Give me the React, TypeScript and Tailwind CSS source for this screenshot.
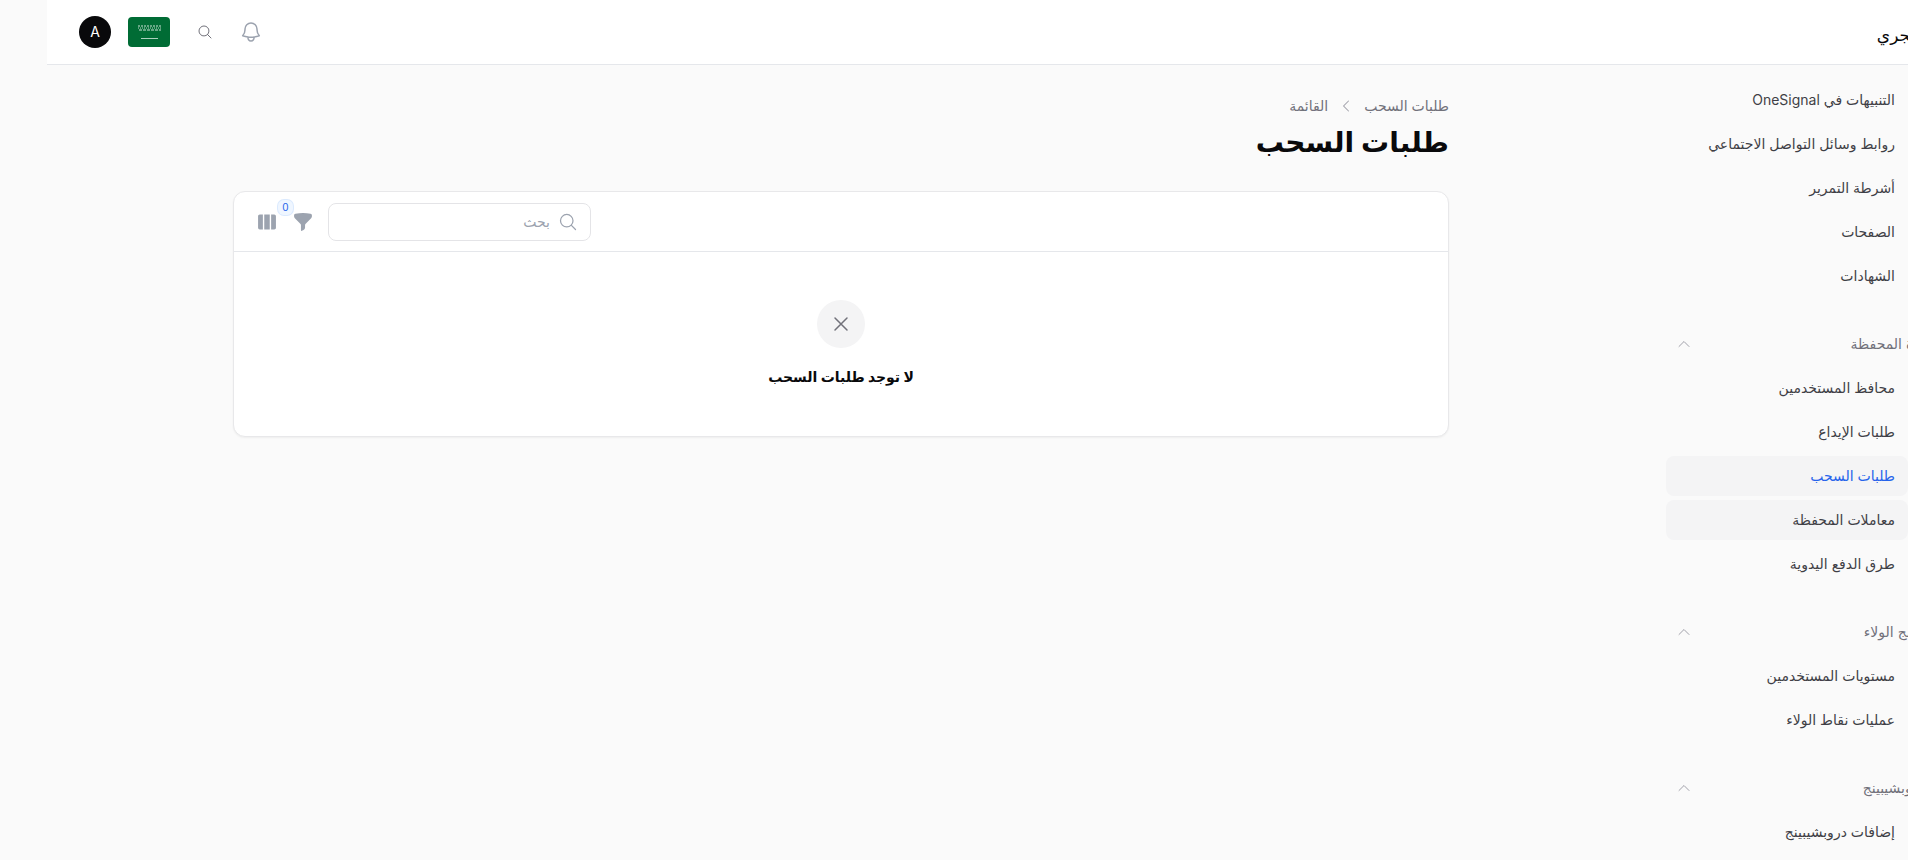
import {
  HiChevronLeft,
  HiFunnel,
  HiOutlineBell,
  HiOutlineChevronUp,
  HiOutlineMagnifyingGlass,
  HiOutlineXMark,
  HiViewColumns,
} from "react-icons/hi2";

const sections = [
  {
    label: "",
    items: [
      "الإشعارات البريدية",
      "التنبيهات في OneSignal",
      "روابط وسائل التواصل الاجتماعي",
      "أشرطة التمرير",
      "الصفحات",
      "الشهادات",
    ],
  },
  {
    label: "إدارة المحفظة",
    items: [
      "محافظ المستخدمين",
      "طلبات الإيداع",
      "طلبات السحب",
      "معاملات المحفظة",
      "طرق الدفع اليدوية",
    ],
  },
  {
    label: "برنامج الولاء",
    items: ["مستويات المستخدمين", "عمليات نقاط الولاء"],
  },
  {
    label: "الدروبشيبينج",
    items: ["إضافات دروبشيبينج"],
  },
];

function SaudiFlag() {
  return (
    <svg viewBox="0 0 42 30" className="h-[30px] w-[42px]">
      <rect width="42" height="30" rx="4" fill="#006c35" />
      <g stroke="#ffffff" fill="none">
        <path d="M10 9h23" strokeWidth="1.2" strokeDasharray="2 1" opacity="0.8" />
        <path d="M10 11h23" strokeWidth="1" strokeDasharray="1 1" opacity="0.7" />
        <path d="M11 13h22" strokeWidth="1.2" strokeDasharray="3 1" opacity="0.8" />
        <path d="M13 21.5h17" strokeWidth="0.8" opacity="0.85" />
      </g>
    </svg>
  );
}

function SidebarItem({ label }: { label: string }) {
  const active = label === "طلبات السحب";
  const hovered = active || label === "معاملات المحفظة";
  return (
    <div
      className={`flex h-10 items-center rounded-lg pr-[13px] text-sm ${
        hovered ? "bg-[#f4f4f5]" : ""
      } ${active ? "text-[#2563eb]" : "text-[#3f3f46]"}`}
    >
      {label}
    </div>
  );
}

function Sidebar() {
  return (
    <aside className="h-[795px] w-[242px] shrink-0 overflow-hidden">
      <div className="mt-[-29px] flex flex-col gap-[28px]">
        {sections.map((section) => (
          <div key={section.label} className="flex flex-col gap-1">
            {section.label && (
              <div className="mr-[-26px] flex h-10 items-center justify-between pl-[10px] text-sm text-[#71717a]">
                <span className="whitespace-nowrap">{section.label}</span>
                <HiOutlineChevronUp className="size-4 text-[#a1a1aa]" />
              </div>
            )}
            {section.items.map((item) => (
              <SidebarItem key={item} label={item} />
            ))}
          </div>
        ))}
      </div>
    </aside>
  );
}

function Topbar() {
  return (
    <header className="flex h-[65px] shrink-0 items-center justify-between overflow-hidden border-b border-[#e5e7eb] bg-white pl-[32px]">
      <span className="mr-[-61px] whitespace-nowrap pt-2 text-[17px] font-medium text-[#09090b]">
        سوق الهجري
      </span>
      <div className="flex items-center">
        <HiOutlineBell className="size-6 text-[#9ca3af]" />
        <HiOutlineMagnifyingGlass className="mr-[26px] size-4 text-[#71717a]" />
        <div className="mr-[27px]">
          <SaudiFlag />
        </div>
        <div className="mr-[17px] flex size-8 items-center justify-center rounded-full bg-[#09090b] text-sm text-white">
          A
        </div>
      </div>
    </header>
  );
}

export default function App() {
  return (
    <div
      dir="rtl"
      className="flex h-screen overflow-hidden bg-[#fafafa] font-['Inter','Noto_Sans','DejaVu_Sans',sans-serif]"
    >
      <div className="flex min-w-0 flex-1 flex-col">
        <Topbar />
        <div className="flex min-h-0 flex-1">
          <Sidebar />
          <main className="min-w-0 flex-1 pl-[186px] pr-[217px] pt-[31px]">
            <nav className="flex h-5 items-center gap-[10px] text-sm text-[#71717a]">
              <span>طلبات السحب</span>
              <HiChevronLeft className="size-4 text-[#a1a1aa]" />
              <span>القائمة</span>
            </nav>
            <h1 className="mt-2 h-9 text-[28px] font-semibold leading-9 text-[#09090b]">
              طلبات السحب
            </h1>

            <section className="mt-[31px] overflow-hidden rounded-xl border border-[#e8e8ea] bg-white shadow-xs">
              <div className="flex h-[60px] items-center border-b border-[#e5e7eb] pl-[22px]">
                <div className="mr-auto flex items-center">
                  <div className="flex h-[38px] w-[263px] items-center rounded-lg border border-[#e4e4e7] bg-white pr-[12px] text-sm text-[#9ca3af]">
                    <HiOutlineMagnifyingGlass className="size-5 text-[#9ca3af]" />
                    <span className="mr-2">بحث</span>
                  </div>
                  <div className="relative mr-[14px]">
                    <HiFunnel className="size-[22px] text-[#9ca3af]" />
                    <span className="absolute -top-[11px] -left-[14px] flex size-[15px] items-center justify-center rounded-md bg-[#eff6ff] text-[10px] text-[#2563eb] ring-1 ring-[#dbeafe]">
                      0
                    </span>
                  </div>
                  <HiViewColumns className="mr-[14px] size-[22px] text-[#9ca3af]" />
                </div>
              </div>
              <div className="flex h-[184px] flex-col items-center pt-[48px]">
                <div className="flex size-12 items-center justify-center rounded-full bg-[#f4f4f5]">
                  <HiOutlineXMark className="size-6 text-[#71717a]" />
                </div>
                <p className="mt-[19px] text-sm font-bold text-[#09090b]">
                  لا توجد طلبات السحب
                </p>
              </div>
            </section>
          </main>
        </div>
      </div>
      <div className="order-last w-[47px] shrink-0" />
    </div>
  );
}
